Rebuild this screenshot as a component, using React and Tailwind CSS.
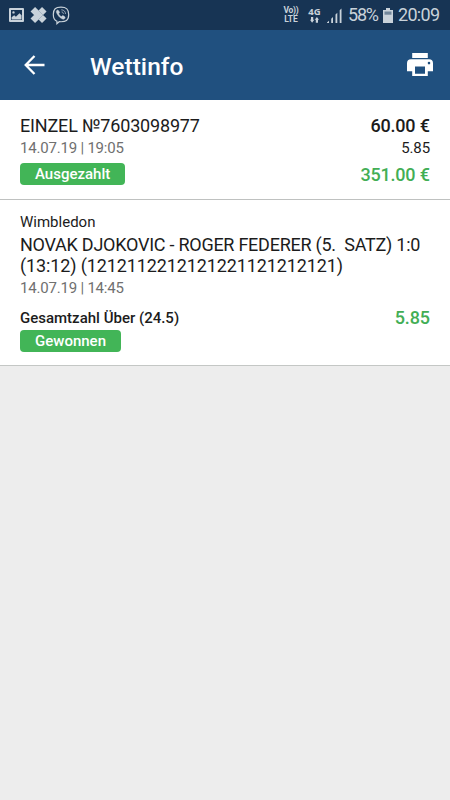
function StatusBar() {
  return (
    <div className="flex h-[30px] items-center justify-between bg-[#173454] pl-[9px] pr-[10px] text-[#c9d2da]">
      <div className="flex items-center gap-[6px]">
        <svg width="15" height="14" viewBox="0 0 15 14">
          <path fill="currentColor" fillRule="evenodd" d="M1 0h13q1 0 1 1v12q0 1-1 1H1q-1 0-1-1V1q0-1 1-1ZM2 2v10h11V2ZM2.600 11.400V9.300l2.600-2 1.700 1.400 3.600-3.400 2 2v4.100ZM4.500 3.200a1.200 1.200 0 1 1 0 2.400a1.200 1.200 0 1 1 0-2.400Z" />
        </svg>
        <svg width="17" height="18" viewBox="0 0 17 18">
          <path d="M2.800 3.200 14.300 14.800M14.300 3.200 2.800 14.800" stroke="currentColor" strokeWidth="6.400" />
          <path d="M7.500 3.500 13 9 7.500 14.500" stroke="#8fa1b1" strokeWidth=".6" fill="none" />
        </svg>
        <svg width="18" height="19" viewBox="0 0 18 19" fill="none" stroke="currentColor" className="-ml-px">
          <path d="M9 1.200C3.600 1.200 1.300 3 1.300 8.600c0 4 1.200 5.800 3.600 6.600v2.500l2.300-2C14 16.200 16.700 14.500 16.700 8.600 16.700 3 14.400 1.200 9 1.200Z" strokeWidth="1.200" />
          <path d="M5.500 4c-1.800.8-1.400 2.300 0 4.500 1.500 2.500 3.400 4.200 5.500 4.700 1.100.3 1.800-.5 2.200-1.400.2-.9-1.900-2.300-2.500-2.200-.8.3-.8 1.100-1.500.8C7.700 9.700 7 8.600 6.800 7.800c-.1-.6.900-.8.8-1.500C7.500 5.500 6.100 3.800 5.500 4Z" fill="currentColor" stroke="currentColor" strokeWidth=".4" />
          <path d="M9.300 3.800c2.600.1 4.200 1.600 4.200 4.200M9.600 5.900c1.200.1 1.800.8 1.800 2" strokeWidth=".7" />
        </svg>
      </div>
      <div className="flex items-center">
        <div className="mr-[9px] flex w-[16px] flex-col items-center text-[8.500px] font-bold">
          <span className="h-[9px] whitespace-nowrap leading-[9px] tracking-[-0.3px]">Vo))</span>
          <span className="h-[9px] leading-[9px]">LTE</span>
        </div>
        <div className="mr-[6px] flex w-[13px] flex-col items-center">
          <span className="font-['Open_Sans','Noto_Sans',sans-serif] text-[9.500px] font-bold leading-[10px]">4G</span>
          <svg width="9" height="6" viewBox="0 0 9 6" fill="currentColor">
            <path d="M1 0h2.200v2.800h1.100L2.100 5.700 0 2.800h1ZM5.800 5.700H8V2.800h1L6.900 0 4.700 2.800h1.100Z" />
          </svg>
        </div>
        <svg width="15" height="15" viewBox="0 0 15 15" fill="currentColor">
          <path d="M0 15v-.5L2 12.700V15ZM4.200 10.800 6 9v6H4.200ZM8.500 6.600l1.800-1.800V15H8.500ZM12.700 2.300 14.500.5V15h-1.800Z" />
        </svg>
        <span className="ml-[6px] w-[30px] whitespace-nowrap text-[18px] leading-[20px] tracking-[-1.200px]">58%</span>
        <svg width="10" height="15" viewBox="0 0 10 15" className="ml-[5px]">
          <path fill="currentColor" d="M3 0h4v2h3v13H0V2h3Z" />
          <path fill="#71869a" d="M1.500 3.500h7v3.200h-7Z" />
        </svg>
        <span className="ml-[5px] w-[42px] whitespace-nowrap text-[18px] leading-[20px] tracking-[-0.7px]">20:09</span>
      </div>
    </div>
  );
}

function Header() {
  return (
    <header className="flex h-[70px] items-center bg-[#20507f] pl-[24px] pr-[17px] text-white">
      <svg width="21" height="20" viewBox="0 0 21 20" fill="none" stroke="currentColor" strokeWidth="2.300" className="-mt-px">
        <path d="M10.500 1 1.700 10l8.800 9M2 10h18.500" />
      </svg>
      <h1 className="ml-[45px] mt-[3px] text-[24.500px] font-medium leading-[30px] tracking-[0.05px]">Wettinfo</h1>
      <svg width="26" height="24" viewBox="0 0 26 24" className="ml-auto">
        <path fill="currentColor" fillRule="evenodd" d="M5.200 0h15.600v5H5.200ZM4 6.300h18q4 0 4 4v7.900h-5.200V23H5.200v-4.800H0v-7.900q0-4 4-4ZM8 13.500v7.200h10v-7.200ZM22 8.800a1.300 1.300 0 1 0 0 2.600a1.300 1.300 0 1 0 0-2.600Z" />
      </svg>
    </header>
  );
}

function Badge({ children }) {
  return (
    <span className="flex h-[22px] items-center rounded-[4px] bg-[#42b557] px-[15px] text-[15px] font-medium leading-[22px] text-white">
      {children}
    </span>
  );
}

export default function App() {
  return (
    <div className="min-h-[800px] w-[450px] bg-[#ededed] font-['Roboto','Noto_Sans',sans-serif] text-[#1c1c1c]">
      <StatusBar />
      <Header />
      <section className="h-[100px] border-b border-[#bfc1c0] bg-white px-[20px] pt-[15px]">
        <div className="flex justify-between text-[18px] leading-[22px]">
          <span className="tracking-[-0.17px]">EINZEL №7603098977</span>
          <span className="mr-[0.300px] font-medium tracking-[-0.2px]">60.00 €</span>
        </div>
        <div className="flex justify-between text-[15px] leading-[22px]">
          <span className="tracking-[-0.2px] text-[#707070]">14.07.19 | 19:05</span>
          <span className="tracking-[-0.1px]">5.85</span>
        </div>
        <div className="mt-[4px] flex h-[22px] items-center justify-between">
          <Badge>Ausgezahlt</Badge>
          <span className="mr-[0.300px] mt-[2px] text-[18px] font-medium leading-[22px] tracking-[-0.2px] text-[#42ae55]">351.00 €</span>
        </div>
      </section>
      <section className="h-[166px] border-b border-[#c4c7c5] bg-white px-[20px] pt-[12px]">
        <div className="text-[15px] leading-[20px]">Wimbledon</div>
        <div className="mt-[2px] whitespace-pre text-[18px] leading-[21px]">
          <div className="tracking-[-0.25px]">NOVAK DJOKOVIC - ROGER FEDERER (5.  SATZ) 1:0</div>
          <div className="tracking-[-0.12px]">(13:12) (1212112212121221121212121)</div>
        </div>
        <div className="mt-px text-[15px] leading-[22px] tracking-[-0.2px] text-[#707070]">14.07.19 | 14:45</div>
        <div className="mt-[8px] flex items-center justify-between leading-[22px]">
          <span className="text-[15px] font-medium">Gesamtzahl Über (24.5)</span>
          <span className="text-[18px] font-medium tracking-[-0.1px] text-[#42ae55]">5.85</span>
        </div>
        <div className="mt-px flex">
          <Badge>Gewonnen</Badge>
        </div>
      </section>
    </div>
  );
}
